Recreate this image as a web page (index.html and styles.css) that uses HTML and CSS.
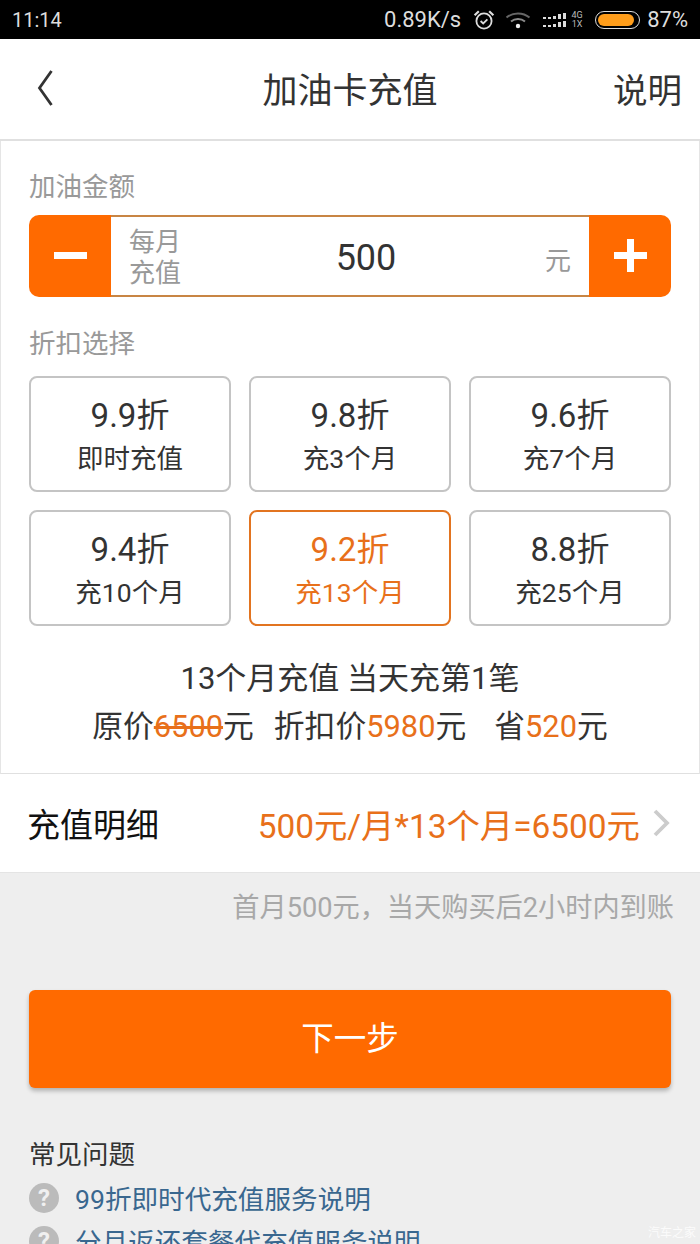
FILE: index.html
```html
<!DOCTYPE html>
<html lang="zh-CN">
<head>
    <meta charset="utf-8">
    <title>加油卡充值</title>
    <link rel="stylesheet" href="styles.css">
</head>
<body>
    <div class="status-bar">
        <span class="status-time">11:14</span>
        <div class="status-right">
            <span class="status-speed">0.89K/s</span>
            <svg class="icon-alarm" width="22" height="22" viewBox="0 0 22 22" fill="none" stroke="#ddd" stroke-width="1.8">
                <circle cx="11" cy="12" r="7.6"/>
                <path d="M7.6 12l2.6 2.4 4.2-4"/>
                <path d="M1.6 6.2L5.8 2.2M20.4 6.2L16.2 2.2" stroke-width="2.2"/>
            </svg>
            <svg class="icon-wifi" width="26" height="18" viewBox="0 0 26 18" fill="none" stroke="#666" stroke-width="2">
                <path d="M1.5 6.5C8 1 18 1 24.5 6.5"/>
                <path d="M6 10.5c4-3.2 10-3.2 14 0" stroke="#8a8a8a"/>
                <circle cx="13" cy="15" r="2.2" fill="#eee" stroke="none"/>
            </svg>
            <svg class="icon-signal" width="27" height="16" viewBox="0 0 27 16" fill="#ddd">
                <rect x="0" y="5" width="3" height="2"/><rect x="5" y="5" width="3" height="2"/><rect x="10" y="4" width="3" height="3"/><rect x="15" y="2" width="3" height="5"/><rect x="20" y="1" width="3" height="6"/>
                <rect x="0" y="13" width="3" height="2"/><rect x="5" y="13" width="3" height="2"/><rect x="10" y="12" width="3" height="3"/><rect x="15" y="10" width="3" height="5"/><rect x="20" y="9" width="3" height="6"/>
            </svg>
            <span class="status-net">4G<br>1X</span>
            <span class="battery"><span class="battery-fill"></span></span>
            <span class="status-percent">87%</span>
        </div>
    </div>

    <div class="header">
        <svg class="back" width="16" height="36" viewBox="0 0 16 36" fill="none" stroke="#333" stroke-width="2.8">
            <path d="M14.5 1L2.5 18 14.5 35"/>
        </svg>
        <h1 class="title">加油卡充值</h1>
        <span class="header-link">说明</span>
    </div>

    <div class="card">
        <div class="section-label">加油金额</div>
        <div class="stepper">
            <div class="step-btn step-minus"><span class="bar-h"></span></div>
            <div class="step-input">
                <span class="step-hint">每月<br>充值</span>
                <span class="step-value">500</span>
                <span class="step-unit">元</span>
            </div>
            <div class="step-btn step-plus"><span class="bar-h"></span><span class="bar-v"></span></div>
        </div>

        <div class="section-label section-label-second">折扣选择</div>
        <div class="options">
            <div class="option"><div class="option-rate">9.9折</div><div class="option-desc">即时充值</div></div>
            <div class="option"><div class="option-rate">9.8折</div><div class="option-desc">充3个月</div></div>
            <div class="option"><div class="option-rate">9.6折</div><div class="option-desc">充7个月</div></div>
            <div class="option"><div class="option-rate">9.4折</div><div class="option-desc">充10个月</div></div>
            <div class="option active"><div class="option-rate">9.2折</div><div class="option-desc">充13个月</div></div>
            <div class="option"><div class="option-rate">8.8折</div><div class="option-desc">充25个月</div></div>
        </div>

        <div class="summary">13个月充值 当天充第1笔</div>
        <div class="summary summary-price">
            <span>原价<s class="orange">6500</s>元</span>
            <span>折扣价<span class="orange">5980</span>元</span>
            <span class="price-save">省<span class="orange">520</span>元</span>
        </div>
    </div>

    <div class="detail">
        <span class="detail-label">充值明细</span>
        <span class="detail-value">500元/月*13个月=6500元</span>
        <svg class="chevron" width="18" height="28" viewBox="0 0 18 28" fill="none" stroke="#ccc" stroke-width="3.8">
            <path d="M3 2l12 12L3 26"/>
        </svg>
    </div>

    <div class="bottom">
        <div class="note">首月500元，当天购买后2小时内到账</div>
        <div class="next-btn">下一步</div>
        <div class="faq-title">常见问题</div>
        <div class="faq-item"><span class="faq-icon">?</span><span>99折即时代充值服务说明</span></div>
        <div class="faq-item"><span class="faq-icon">?</span><span>分月返还套餐代充值服务说明</span></div>
    </div>

    <div class="watermark">汽车之家</div>
</body>
</html>
```

FILE: styles.css
```css
html, body {
    margin: 0;
    height: 1244px;
    overflow: hidden;
}
body {
    position: relative;
    width: 700px;
    background-color: #eeeeee;
    color: #333;
    font-family: Roboto, "Noto Sans CJK SC", sans-serif;
}

/* status bar */
.status-bar {
    height: 39px;
    padding: 0 12px;
    box-sizing: border-box;
    display: flex;
    justify-content: space-between;
    align-items: center;
    background-color: #000;
    color: #ddd;
    font-size: 20px;
}
.status-right {
    display: flex;
    align-items: center;
    font-size: 22px;
}
.status-speed {
    margin-right: 12px;
}
.icon-alarm {
    margin-right: 10px;
}
.icon-wifi {
    margin-right: 12px;
}
.status-net {
    width: 14px;
    margin-right: 11px;
    font-size: 9px;
    line-height: 9px;
    text-align: center;
    color: #bbb;
}
.battery {
    width: 45px;
    height: 18px;
    box-sizing: border-box;
    margin-right: 7px;
    padding: 2px;
    border: 1px solid #ddd;
    border-radius: 9px;
    display: flex;
}
.battery-fill {
    width: 36px;
    border-radius: 6px;
    background-color: #ff9d1a;
}

/* header */
.header {
    height: 102px;
    box-sizing: border-box;
    padding: 0 18px 2px;
    display: grid;
    grid-template-columns: 1fr auto 1fr;
    align-items: center;
    background-color: #fff;
    border-bottom: 2px solid #e0e0e0;
}
.back {
    margin-left: 19px;
}
.title {
    margin: 0 0 2px;
    font-size: 35px;
    font-weight: normal;
}
.header-link {
    justify-self: end;
    font-size: 34.5px;
}

/* main card */
.card {
    height: 633px;
    box-sizing: border-box;
    padding: 28px 28px 0;
    background-color: #fff;
    border-left: 1px solid #e5e5e5;
    border-right: 1px solid #e5e5e5;
    border-bottom: 1px solid #e0e0e0;
}
.section-label {
    height: 36px;
    line-height: 36px;
    font-size: 26.5px;
    color: #999;
}
.section-label-second {
    margin-top: 29px;
}
.stepper {
    height: 82px;
    margin-top: 10px;
    display: flex;
}
.step-btn {
    position: relative;
    width: 82px;
    background-color: #ff6a00;
    flex-shrink: 0;
}
.step-minus {
    border-radius: 10px 0 0 10px;
}
.step-plus {
    border-radius: 0 10px 10px 0;
}
.bar-h,
.bar-v {
    position: absolute;
    background-color: #fff;
}
.bar-h {
    left: 25px;
    top: 37px;
    width: 33px;
    height: 7px;
}
.bar-v {
    left: 38px;
    top: 24px;
    width: 7px;
    height: 33px;
}
.step-input {
    flex: 1;
    box-sizing: border-box;
    padding: 4px 18px 0;
    display: flex;
    align-items: center;
    justify-content: space-between;
    border-top: 2px solid #c88544;
    border-bottom: 2px solid #c88544;
}
.step-hint {
    font-size: 26px;
    line-height: 31px;
    color: #999;
}
.step-value {
    font-size: 36px;
    margin-left: 6px;
}
.step-unit {
    font-size: 26px;
    color: #999;
}

/* discount options */
.options {
    margin-top: 14px;
    display: grid;
    grid-template-columns: repeat(3, 202px);
    grid-auto-rows: 116px;
    gap: 18px;
}
.option {
    box-sizing: border-box;
    padding-top: 14px;
    border: 2px solid #c4c4c4;
    border-radius: 8px;
    text-align: center;
}
.option-rate {
    height: 48px;
    line-height: 48px;
    font-size: 33px;
}
.option-desc {
    height: 38px;
    line-height: 38px;
    font-size: 26.5px;
}
.option.active {
    border-color: #e27420;
    color: #e8701a;
}

/* summary */
.summary {
    margin-top: 31px;
    line-height: 44px;
    font-size: 31px;
    text-align: center;
}
.summary-price {
    margin-top: 4px;
    font-size: 30.8px;
    display: flex;
    justify-content: center;
    gap: 20px;
}
.price-save {
    margin-left: 8px;
}
.orange {
    color: #e8701a;
}

/* detail row */
.detail {
    height: 99px;
    box-sizing: border-box;
    padding: 0 30px 0 27px;
    display: flex;
    align-items: center;
    background-color: #fff;
    border-bottom: 1px solid #e4e4e4;
}
.detail-label {
    font-size: 33px;
    color: #111;
}
.detail-value {
    margin-left: auto;
    margin-right: 12px;
    font-size: 33.4px;
    color: #e8701a;
}

/* bottom part */
.bottom {
    padding: 0 29px;
}
.note {
    margin-top: 16px;
    margin-right: -3px;
    line-height: 38px;
    font-size: 27.2px;
    color: #a8a8a8;
    text-align: right;
}
.next-btn {
    height: 98px;
    margin-top: 63px;
    line-height: 99px;
    text-align: center;
    font-size: 32.5px;
    color: #fff;
    background-color: #ff6a00;
    border-radius: 6px;
    box-shadow: 0 3px 4px rgba(0, 0, 0, 0.25);
}
.faq-title {
    margin-top: 48px;
    margin-bottom: 2px;
    line-height: 38px;
    font-size: 26.5px;
}
.faq-item {
    height: 43px;
    display: flex;
    align-items: center;
    gap: 16px;
    font-size: 26.6px;
    color: #39678f;
}
.faq-icon {
    width: 30px;
    height: 30px;
    border-radius: 50%;
    background-color: #bbb;
    color: #f0f0f0;
    font-size: 24px;
    font-weight: bold;
    line-height: 30px;
    text-align: center;
}
.watermark {
    position: absolute;
    right: 4px;
    bottom: 4px;
    font-size: 12px;
    color: rgba(255, 255, 255, 0.8);
}
```
